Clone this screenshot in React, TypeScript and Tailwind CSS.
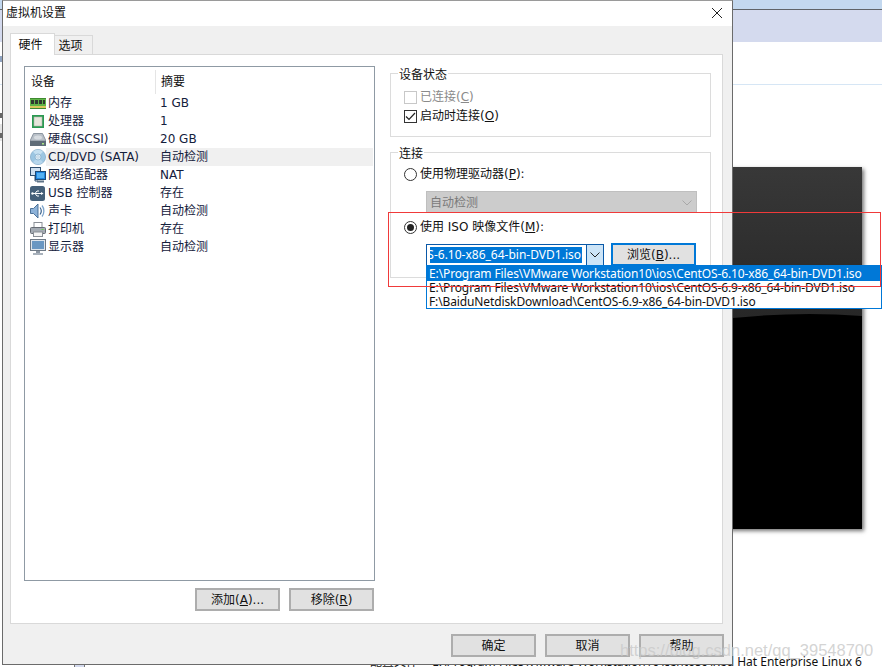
import React from "react";

const font = { fontFamily: '"DejaVu Sans", "Noto Sans CJK SC", sans-serif' };
const listFont = { fontFamily: '"Noto Sans", "Noto Sans CJK SC", sans-serif' };

function Ram() {
  return (
    <svg width="16" height="11" viewBox="0 0 16 11">
      <rect x="0" y="0" width="16" height="8" fill="#5fb548" />
      <rect x="0" y="0" width="16" height="1" fill="#3f8a30" />
      <rect x="1" y="2" width="3" height="4" fill="#2f3a2f" />
      <rect x="5" y="2" width="3" height="4" fill="#2f3a2f" />
      <rect x="9" y="2" width="3" height="4" fill="#2f3a2f" />
      <rect x="13" y="2" width="2" height="4" fill="#2f3a2f" />
      <rect x="0" y="8" width="16" height="2" fill="#d9c75c" />
      <rect x="0" y="10" width="16" height="1" fill="#3f8a30" />
    </svg>
  );
}
function Cpu() {
  return (
    <svg width="12" height="13" viewBox="0 0 12 13">
      <rect x="0" y="0" width="12" height="13" fill="#2a9a52" />
      <rect x="2" y="2" width="8" height="9" fill="#e6e6dc" stroke="#b5b5aa" strokeWidth="0.6" />
    </svg>
  );
}
function Disk() {
  return (
    <svg width="16" height="13" viewBox="0 0 16 13">
      <path d="M3.5 0.5h9L16 8H0z" fill="#b9c0c8" stroke="#77838f" strokeWidth="0.8" />
      <ellipse cx="8" cy="4.5" rx="4" ry="2" fill="#d6dbe0" />
      <rect x="0" y="8" width="16" height="5" fill="#5f6c78" />
      <rect x="12" y="10" width="2" height="1.5" fill="#a8e884" />
    </svg>
  );
}
function Cd() {
  return (
    <svg width="16" height="16" viewBox="0 0 16 16">
      <circle cx="8" cy="8" r="7.6" fill="#9cc6e2" stroke="#7fa8c6" strokeWidth="0.7" />
      <path d="M8 8L3 2.8A7 7 0 0 1 13 2.8z" fill="#c4dff0" />
      <path d="M8 8L3 13.2A7 7 0 0 0 13 13.2z" fill="#b6d6ec" />
      <circle cx="8" cy="8" r="3" fill="#dcecf6" stroke="#7fa8c6" strokeWidth="0.7" />
      <circle cx="8" cy="8" r="1.2" fill="#ffffff" stroke="#7fa8c6" strokeWidth="0.5" />
    </svg>
  );
}
function Net() {
  return (
    <svg width="16" height="16" viewBox="0 0 16 16">
      <rect x="0.5" y="0.5" width="10" height="8" fill="#cfe0f0" stroke="#2f4f70" />
      <path d="M5 9v5h3" stroke="#2f4f70" fill="none" />
      <rect x="5.5" y="4.5" width="10" height="8" fill="#1f86e0" stroke="#1c4a78" />
      <rect x="7" y="6" width="7" height="5" fill="#55b2f5" />
      <rect x="7" y="13.5" width="7" height="2" fill="#5f7488" />
    </svg>
  );
}
function Usb() {
  return (
    <svg width="15" height="15" viewBox="0 0 15 15">
      <rect x="0" y="0" width="15" height="15" rx="2.5" fill="#456079" />
      <path d="M2 7.5h10M5 7.5l2-2.5h2M5 7.5l2 2.5h2" stroke="#fff" strokeWidth="1" fill="none" />
      <path d="M11 6l2.5 1.5L11 9z" fill="#fff" />
      <circle cx="2.5" cy="7.5" r="1.2" fill="#fff" />
    </svg>
  );
}
function Speaker() {
  return (
    <svg width="15" height="16" viewBox="0 0 15 16">
      <path d="M0.5 5.5h3L8 1v14L3.5 10.5h-3z" fill="#8db2d8" stroke="#3e6690" strokeWidth="0.9" />
      <path d="M10 4.5c1.5 2 1.5 5 0 7" stroke="#3e6690" strokeWidth="1.2" fill="none" />
      <path d="M12 2.5c2.5 3 2.5 8 0 11" stroke="#7ea5cc" strokeWidth="1.3" fill="none" />
    </svg>
  );
}
function Printer() {
  return (
    <svg width="16" height="15" viewBox="0 0 16 15">
      <rect x="4" y="0.5" width="8" height="5" fill="#fff" stroke="#8a8f96" />
      <rect x="0.5" y="5.5" width="15" height="6" rx="1" fill="#a4abb3" stroke="#666c74" />
      <rect x="11.5" y="7" width="2" height="1" fill="#64d24a" />
      <rect x="3.5" y="10" width="9" height="4.5" fill="#f4f4f4" stroke="#8a8f96" />
    </svg>
  );
}
function Monitor() {
  return (
    <svg width="16" height="16" viewBox="0 0 16 16">
      <rect x="0.5" y="0.5" width="15" height="11" fill="#dfe5ec" stroke="#6f7a86" />
      <rect x="2" y="2" width="12" height="8" fill="#6a97c2" />
      <rect x="6" y="12" width="4" height="2" fill="#8d97a3" />
      <rect x="3" y="14" width="10" height="2" fill="#a8b1bb" />
    </svg>
  );
}

const rows: [React.ReactNode, string, string, boolean?][] = [
  [<Ram />, "内存", "1 GB"],
  [<span className="pl-[2px] flex"><Cpu /></span>, "处理器", "1"],
  [<Disk />, "硬盘(SCSI)", "20 GB"],
  [<Cd />, "CD/DVD (SATA)", "自动检测", true],
  [<Net />, "网络适配器", "NAT"],
  [<Usb />, "USB 控制器", "存在"],
  [<Speaker />, "声卡", "自动检测"],
  [<Printer />, "打印机", "存在"],
  [<Monitor />, "显示器", "自动检测"],
];

function Btn({ children }: { children: React.ReactNode }) {
  return (
    <div className="w-[85px] h-[23px] flex items-center justify-center bg-[#e1e1e1] border-2 border-[#adadad] text-[12px] text-[#111]">
      {children}
    </div>
  );
}

function Chevron({ color }: { color: string }) {
  return (
    <svg width="10" height="6" viewBox="0 0 10 6">
      <path d="M0.5 0.5L5 5l4.5-4.5" stroke={color} fill="none" />
    </svg>
  );
}

function Radio({ on }: { on?: boolean }) {
  return (
    <span className="w-[13px] h-[13px] rounded-full border border-[#333] bg-white flex items-center justify-center shrink-0">
      {on && <span className="w-[7px] h-[7px] rounded-full bg-[#222]" />}
    </span>
  );
}

function Group({ title, className, children }: { title: string; className: string; children: React.ReactNode }) {
  return (
    <div className={`relative border border-[#dcdcdc] ${className}`}>
      <span className="absolute left-[7px] top-[-6px] bg-white px-[1px] leading-[14px]">{title}</span>
      {children}
    </div>
  );
}

export default function App() {
  return (
    <div className="relative w-[882px] h-[667px] overflow-hidden bg-white text-[12px] text-[#111]" style={font}>
      {/* desktop behind the dialog */}
      <div className="absolute left-0 top-0 w-full h-[9px] bg-[#c3d8ef]" />
      <div className="absolute left-0 top-[9px] w-full h-[1px] bg-[#5f6368]" />
      <div className="absolute left-0 top-[10px] w-full h-[32px] bg-[#d4daee]" />
      <div className="absolute left-0 top-[84px] w-full h-[1px] bg-[#d6e6f5]" />
      <div className="absolute left-0 top-[56px] w-[2px] h-[6px] bg-[#8fa3c0]" />
      <div className="absolute left-0 top-[113px] w-[2px] h-[5px] bg-[#666]" />
      <div className="absolute left-0 top-[124px] w-[2px] h-[17px] bg-[#e4e4e4]" />
      <div className="absolute left-0 top-[133px] w-[2px] h-[5px] bg-[#666]" />
      <div className="absolute left-[74px] top-[660px] w-[11px] h-[7px] bg-[#d4daee] border-x border-[#777]" />
      <div className="absolute left-[600px] top-[167px] w-[262px] h-[362px] bg-black shadow-[2px_2px_4px_rgba(0,0,0,0.55)]">
        <svg width="262" height="162" viewBox="0 0 262 162" className="block">
          <defs>
            <linearGradient id="gloss" x1="0" y1="0" x2="0" y2="1">
              <stop offset="0" stopColor="#383838" />
              <stop offset="1" stopColor="#262626" />
            </linearGradient>
          </defs>
          <path d="M0 0H262V149Q200 144 133 151Q60 157 0 160Z" fill="url(#gloss)" />
        </svg>
      </div>
      <div className="absolute left-[370px] top-[653px] whitespace-nowrap text-[12px] text-[#111]" style={listFont}>
        <span className="mr-[11px]">配置文件</span> E:\Program Files\VMware Workstation10\centos6\Red Hat Enterprise Linux 6
      </div>

      {/* dialog */}
      <div className="absolute left-[2px] top-0 w-[731px] h-[665px] flex flex-col bg-[#f0f0f0] border-x border-b border-[#6b6b6b] border-t border-t-[#9a9a9a]">
        <div className="h-[25px] bg-white flex items-center justify-between pl-[3px] pr-[10px] pb-[2px] shrink-0">
          <span className="text-[12px] text-[#111]">虚拟机设置</span>
          <svg width="10" height="10" viewBox="0 0 10 10">
            <path d="M0 0l10 10M10 0L0 10" stroke="#222" strokeWidth="1" />
          </svg>
        </div>
        <div className="flex items-end pl-[7px] h-[28px] shrink-0">
          <div className="relative z-10 w-[45px] h-[22px] bg-white border border-b-0 border-[#d9d9d9] flex items-center justify-center pr-[4px] mb-[-1px]">硬件</div>
          <div className="w-[38px] h-[19px] bg-[#f0f0f0] border border-b-0 border-l-0 border-[#d9d9d9] flex items-center justify-center pr-[6px] pt-[2px]">选项</div>
        </div>
        <div className="ml-[7px] mr-[9px] h-[570px] bg-white border border-[#d9d9d9] flex pl-[13px] pt-[11px] pr-[10px]">
          <div className="w-[351px] shrink-0 flex flex-col">
            <div className="h-[515px] border border-[#8f9aa4] bg-white pt-[1px]">
              <div className="flex h-[26px] items-center pt-[2px]">
                <div className="w-[130px] pl-[6px]">设备</div>
                <div className="border-l border-[#e5e5e5] pl-[5px] h-full flex items-center flex-1 mr-[2px]">摘要</div>
              </div>
              {rows.map(([icon, name, val, sel], i) => (
                <div key={i} className="flex h-[18px] items-center">
                  <div className="w-[21px] pl-[5px] shrink-0 flex items-center h-[18px]">{icon}</div>
                  <div className={`w-[110px] h-[18px] flex items-center pl-[2px] ${sel ? "bg-[#f0f0f0]" : ""}`}>
                    <span className="text-[#14203c] whitespace-nowrap">{name}</span>
                  </div>
                  <div className={`flex-1 mr-[1px] h-[18px] flex items-center pl-[4px] ${sel ? "bg-[#f0f0f0]" : ""}`}>
                    <span className="text-[#14203c]">{val}</span>
                  </div>
                </div>
              ))}
            </div>
            <div className="flex justify-end gap-[9px] mt-[7px] mr-[1px]">
              <Btn>添加(<u>A</u>)...</Btn>
              <Btn>移除(<u>R</u>)</Btn>
            </div>
          </div>
          <div className="ml-[15px] flex flex-col flex-1 pt-[7px]">
            <Group title="设备状态" className="h-[64px] w-[321px]">
              <div className="flex items-center gap-[3px] pl-[13px] mt-[14px] h-[18px] text-[#8a8a8a]">
                <span className="w-[13px] h-[13px] border border-[#c8c8c8] bg-white" />
                <span>已连接(<u>C</u>)</span>
              </div>
              <div className="flex items-center gap-[3px] pl-[13px] mt-[1px] h-[18px]">
                <span className="w-[13px] h-[13px] border border-[#333] bg-white flex items-center justify-center">
                  <svg width="11" height="9" viewBox="0 0 11 9"><path d="M1 4.5L4 7.5L10 1" stroke="#222" strokeWidth="1.2" fill="none" /></svg>
                </span>
                <span>启动时连接(<u>O</u>)</span>
              </div>
            </Group>
            <Group title="连接" className="h-[126px] w-[321px] mt-[15px]">
              <div className="flex items-center gap-[3px] pl-[13px] mt-[12px] h-[18px]">
                <Radio />
                <span>使用物理驱动器(<u>P</u>):</span>
              </div>
              <div className="ml-[35px] mt-[8px] w-[271px] h-[22px] bg-[#cccccc] border border-[#bfbfbf] flex items-center justify-between pl-[3px] pr-[4px] pt-[2px] text-[#7a7a7a]">
                <span>自动检测</span>
                <Chevron color="#a8a8a8" />
              </div>
              <div className="flex items-center gap-[3px] pl-[13px] mt-[5px] h-[18px]">
                <Radio on />
                <span>使用 ISO 映像文件(<u>M</u>):</span>
              </div>
              <div className="flex items-center ml-[35px] mt-[7px]">
                <div className="w-[161px] h-[22px] border border-[#0a59a8] bg-white flex items-center pl-[3px] overflow-hidden">
                  <span className="bg-[#0078d7] text-white h-[16px] leading-[16px] whitespace-nowrap overflow-hidden w-[152px] flex justify-end pr-[1px]" style={listFont}>
                    CentOS-6.10-x86_64-bin-DVD1.iso
                  </span>
                </div>
                <div className="w-[17px] h-[22px] border border-l-0 border-[#0a59a8] bg-[#cce4f7] flex items-center justify-center">
                  <Chevron color="#222" />
                </div>
                <div className="ml-[7px] w-[85px] h-[23px] flex items-center justify-center bg-[#e1e1e1] border-2 border-[#0078d7]">
                  浏览(<u>B</u>)...
                </div>
              </div>
            </Group>
          </div>
        </div>
        <div className="flex justify-end gap-[9px] pr-[8px] mt-[10px]">
          <Btn>确定</Btn>
          <Btn>取消</Btn>
          <Btn>帮助</Btn>
        </div>
      </div>

      {/* open combo list */}
      <div className="absolute left-[426px] top-[265px] w-[456px] h-[44px] bg-white border border-[#0078d7] text-[#111] whitespace-nowrap tracking-[-0.12px]" style={listFont}>
        <div className="h-[15px] leading-[15px] bg-[#0078d7] text-white pl-[2px]">E:\Program Files\VMware Workstation10\ios\CentOS-6.10-x86_64-bin-DVD1.iso</div>
        <div className="h-[14px] leading-[13px] pl-[2px]">E:\Program Files\VMware Workstation10\ios\CentOS-6.9-x86_64-bin-DVD1.iso</div>
        <div className="h-[14px] leading-[13px] pl-[2px]">F:\BaiduNetdiskDownload\CentOS-6.9-x86_64-bin-DVD1.iso</div>
      </div>

      {/* red annotation */}
      <div className="absolute left-[388px] top-[212px] w-[493px] h-[75px] border border-[#f03a3a]" />

      {/* watermark */}
      <div className="absolute left-[620px] top-[638px] text-[16.5px] text-[#c9c9c9]/80 whitespace-nowrap" style={{ fontFamily: '"Liberation Sans", sans-serif' }}>
        https://blog.csdn.net/qq_39548700
      </div>
    </div>
  );
}
